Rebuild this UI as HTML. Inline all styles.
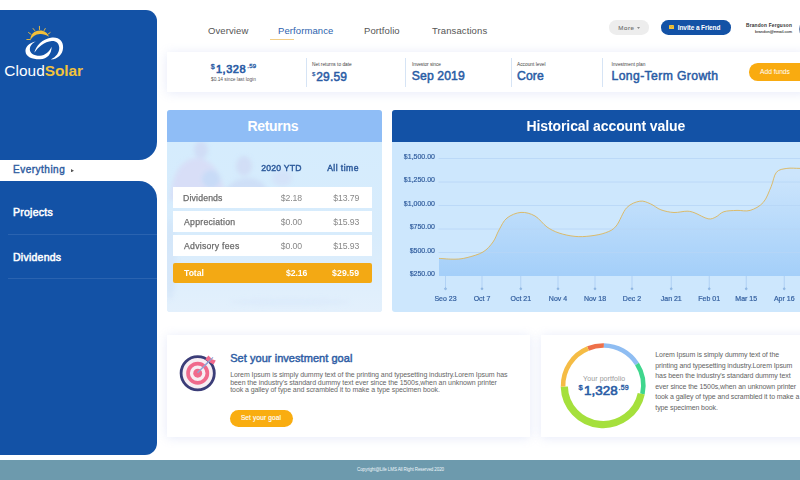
<!DOCTYPE html>
<html><head><meta charset="utf-8">
<style>
*{margin:0;padding:0;box-sizing:border-box}
html,body{width:800px;height:480px;overflow:hidden;background:#fff;font-family:"Liberation Sans",sans-serif}
.a{position:absolute}
.sb{background:#1352a6}
#sbtop{left:0;top:10px;width:157px;height:150px;border-radius:0 11px 18px 0}
#sbbot{left:0;top:181px;width:157px;height:274px;border-radius:0 18px 12px 0}
#footer{left:0;top:460px;width:800px;height:20px;background:#6d9aad;color:#eef6fa;font-size:4.5px;letter-spacing:-0.1px;text-align:center;line-height:20px;text-indent:1px}
.nav{top:26.2px;font-size:9.5px;line-height:1;color:#555;white-space:nowrap;letter-spacing:0.1px}
.card{background:#fff;box-shadow:0 1px 10px rgba(130,150,225,.2)}
.lbl{font-size:4.8px;line-height:1;color:#444;white-space:nowrap}
.big{font-size:13px;font-weight:bold;color:#2a5ca5;white-space:nowrap}
.div{width:1px;background:#d6e4f5}
.bv{line-height:1;color:#2a5ca5;white-space:nowrap;-webkit-text-stroke:0.5px #2a5ca5}

.th{font-size:8.6px;line-height:1;color:#2e5b9c;white-space:nowrap;-webkit-text-stroke:0.45px #2e5b9c}
.row{left:6.1px;width:199px;background:#fff;font-size:8.7px;line-height:1;color:#6b6b6b;white-space:nowrap}
.row span{position:absolute;top:6.3px}
.row .l{left:10px;-webkit-text-stroke:0.25px #6b6b6b}
.row .v1{right:70.1px;color:#888;letter-spacing:-0.1px}
.row .v2{right:12.9px;color:#888;letter-spacing:-0.1px}
.tot{background:#f3a914;color:#fff;font-weight:bold;border-radius:2px}
.tot span,.tot .v1,.tot .v2{color:#fff}
.tot .l{-webkit-text-stroke:0}
.body7{font-size:7px;color:#666;line-height:8px}
</style></head><body>

<!-- Sidebar -->
<div id="sbtop" class="a sb"></div>
<div id="sbbot" class="a sb"></div>
<div class="a" style="left:13px;top:164.8px;font-size:10px;line-height:1;color:#2f5c9f;letter-spacing:0.5px;-webkit-text-stroke:0.4px #2f5c9f;white-space:nowrap">Everything</div>
<svg class="a" style="left:70.6px;top:168.8px" width="3" height="3.4" viewBox="0 0 3 3.4"><path d="M0,0 L3,1.7 L0,3.4 Z" fill="#555"/></svg>
<div class="a" style="left:13px;top:206.8px;font-size:10.5px;line-height:1;color:#fff;letter-spacing:0.25px;-webkit-text-stroke:0.5px #fff;white-space:nowrap">Projects</div>
<div class="a" style="left:8px;top:234px;width:149px;height:1px;background:#2a63b0"></div>
<div class="a" style="left:13px;top:251.6px;font-size:10.5px;line-height:1;color:#fff;letter-spacing:0.25px;-webkit-text-stroke:0.5px #fff;white-space:nowrap">Dividends</div>
<div class="a" style="left:8px;top:277.5px;width:149px;height:1px;background:#2a63b0"></div>

<!-- Logo -->
<svg class="a" style="left:20px;top:22px" width="50" height="40" viewBox="0 0 600 480">
  <path fill="#f2bf3a" d="M125,225 C118,150 172,103 240,103 C292,103 332,132 348,178 C310,152 278,142 240,144 C185,147 142,178 125,225 Z"/>
  <g stroke="#f2bf3a" stroke-width="11" stroke-linecap="round">
    <line x1="103" y1="127" x2="133" y2="148"/>
    <line x1="157" y1="78" x2="177" y2="103"/>
    <line x1="233" y1="52" x2="234" y2="90"/>
    <line x1="303" y1="78" x2="290" y2="102"/>
    <line x1="362" y1="127" x2="336" y2="146"/>
    <line x1="82" y1="210" x2="120" y2="210"/>
  </g>
  <g fill="#fff">
    <path d="M192,234 C110,248 60,300 66,355 C72,422 150,450 240,448 C330,445 378,385 380,298 C352,360 302,403 240,404 C165,405 116,372 118,326 C120,282 150,250 192,234 Z"/>
    <path d="M172,370 C190,290 268,198 385,186 C472,178 522,236 517,308 C512,390 455,442 370,450 C436,418 471,368 471,310 C471,255 432,224 382,227 C292,233 218,298 172,370 Z"/>
  </g>
</svg>

<div class="a" style="left:4.3px;top:63px;font-size:15.4px;line-height:1;color:#fff;white-space:nowrap;letter-spacing:0.05px">Cloud<b style="color:#f1c23c;letter-spacing:-0.05px">Solar</b></div>

<!-- Nav -->
<div class="a nav" style="left:208px">Overview</div>
<div class="a nav" style="left:278px;color:#2d62ad">Performance</div>
<div class="a" style="left:270px;top:38.5px;width:24px;height:0.9px;background:#f2cd84"></div>
<div class="a nav" style="left:364px">Portfolio</div>
<div class="a nav" style="left:432px">Transactions</div>

<div class="a" style="left:609px;top:20.2px;width:40.2px;height:14.6px;border-radius:7.3px;background:#ededed"></div>
<div class="a" style="left:618.3px;top:24.75px;font-size:6.2px;line-height:1;color:#6f6f6f;letter-spacing:0.5px;white-space:nowrap;-webkit-text-stroke:0.1px #6f6f6f">More</div>
<svg class="a" style="left:636.5px;top:26.5px" width="3" height="2" viewBox="0 0 3 2"><path d="M0,0 L3,0 L1.5,2 Z" fill="#888"/></svg>
<div class="a" style="left:660.7px;top:20.2px;width:70.3px;height:14.6px;border-radius:7.3px;background:#1352a6"></div>
<div class="a" style="left:668.9px;top:25px;width:5.5px;height:4.1px;background:#f2c33c;border-radius:0.5px"></div>
<svg class="a" style="left:668.9px;top:25px" width="5.5" height="4.1" viewBox="0 0 5.5 4.1"><path d="M0.2,0.3 L2.75,2.2 L5.3,0.3" fill="none" stroke="#c9981e" stroke-width="0.5"/></svg>
<div class="a" style="left:677.8px;top:24.5px;font-size:6.5px;line-height:1;font-weight:bold;color:#fff;letter-spacing:-0.1px;white-space:nowrap">Invite a Friend</div>
<div class="a" style="left:746px;top:23.7px;font-size:4.8px;line-height:1;font-weight:bold;color:#333;letter-spacing:0.2px;white-space:nowrap">Brandon Ferguson</div>
<div class="a" style="left:755px;top:29.6px;font-size:4px;line-height:1;color:#444;white-space:nowrap;-webkit-text-stroke:0.1px #444">brandon@email.com</div>
<div class="a" style="left:798.5px;top:19px;width:20px;height:20px;border-radius:50%;background:radial-gradient(circle at 30% 45%,#8aa3c8,#3a5585 70%)"></div>

<!-- Stats card -->
<div class="a card" style="left:167px;top:52px;width:640px;height:40px"></div>
<div class="a bv" style="left:210.8px;top:62.6px;font-size:7.2px;-webkit-text-stroke:0.3px #2a5ca5">$</div>
<div class="a bv" style="left:216px;top:63.7px;font-size:11px;letter-spacing:0.5px;-webkit-text-stroke:0.65px #2a5ca5">1,328</div>
<div class="a bv" style="left:247.3px;top:63px;font-size:6px;letter-spacing:0.2px;-webkit-text-stroke:0.35px #2a5ca5">.59</div>
<div class="a lbl" style="left:211px;top:78.4px;color:#555">$0.14 since last login</div>
<div class="a div" style="left:305.5px;top:58px;height:28.5px"></div>
<div class="a lbl" style="left:312px;top:62.9px">Net returns to date</div>
<div class="a bv" style="left:312px;top:71.2px;font-size:6px;-webkit-text-stroke:0.2px #2a5ca5">$</div>
<div class="a bv" style="left:316.3px;top:70.9px;font-size:12px;letter-spacing:0.15px">29.59</div>
<div class="a div" style="left:405px;top:58px;height:28.5px"></div>
<div class="a lbl" style="left:412px;top:62.9px;letter-spacing:-0.05px">Investor since</div>
<div class="a bv" style="left:411.8px;top:70px;font-size:12.2px;letter-spacing:0.1px">Sep 2019</div>
<div class="a div" style="left:511px;top:58px;height:28.5px"></div>
<div class="a lbl" style="left:517px;top:62.9px">Account level</div>
<div class="a bv" style="left:517px;top:70.3px;font-size:12.2px;letter-spacing:0.1px">Core</div>
<div class="a div" style="left:601.5px;top:58px;height:28.5px"></div>
<div class="a lbl" style="left:611.5px;top:62.9px">Investment plan</div>
<div class="a bv" style="left:611.5px;top:70px;font-size:12.2px;letter-spacing:0.38px">Long-Term Growth</div>
<div class="a" style="left:748.8px;top:63.15px;width:60px;height:17.5px;border-radius:8.75px;background:#f9ab10"></div><div class="a" style="left:760.1px;top:68.8px;font-size:6.7px;line-height:1;color:#fff;letter-spacing:-0.05px;white-space:nowrap">Add funds</div>

<!-- Returns panel -->
<div class="a" style="left:167px;top:110px;width:215px;height:202px;background:#dcecfb;border-radius:3px;overflow:hidden">
  <div class="a" style="left:0;top:0;width:215px;height:32px;background:#8fbdf6"></div><div class="a" style="left:80.4px;top:9.1px;color:#fff;font-size:14px;font-weight:bold;line-height:1;letter-spacing:-0.3px;white-space:nowrap">Returns</div>

  <div class="a" style="left:0;top:32px;width:215px;height:170px;background:linear-gradient(180deg,#d5ecfd 0%,#d8ecfc 55%,#e3f0fc 100%)"></div>
  <svg class="a" style="left:0;top:32px" width="215" height="170" viewBox="167 142 215 170">
    <defs><filter id="bl" x="-50%" y="-50%" width="200%" height="200%"><feGaussianBlur stdDeviation="2.2"/></filter></defs>
    <g filter="url(#bl)">
      <path d="M170,200 C172,175 180,160 195,158 C210,158 222,170 226,200 Z" fill="#d8d6f4" opacity="0.6"/>
      <ellipse cx="201" cy="150" rx="7" ry="9" fill="#cdd3f2" opacity="0.6"/>
      <ellipse cx="211" cy="179" rx="9" ry="9" fill="#bcd8f7" opacity="0.6"/>
      <ellipse cx="244" cy="166" rx="8" ry="10" fill="#cfd5f2" opacity="0.6"/>
      <path d="M222,200 C224,186 235,178 248,178 C262,178 268,188 270,200 Z" fill="#c9d6f3" opacity="0.55"/>
      <ellipse cx="282" cy="178" rx="10" ry="8" fill="#d4def6" opacity="0.6"/>
      <ellipse cx="170" cy="260" rx="6" ry="40" fill="#cfe2f8" opacity="0.5"/>
      <ellipse cx="290" cy="302" rx="60" ry="4" fill="#d3e6f9" opacity="0.35"/>
    </g>
  </svg>
  <div class="a" style="left:0;top:32px;width:215px;height:170px">
    <div class="a th" style="right:80.3px;top:22.3px;letter-spacing:0.25px">2020 YTD</div>
    <div class="a th" style="right:23.1px;top:22.3px;letter-spacing:0.45px">All time</div>
    <div class="a row" style="top:45.3px;height:20.8px"><span class="l" style="letter-spacing:0.15px">Dividends</span><span class="v1">$2.18</span><span class="v2">$13.79</span></div>
    <div class="a row" style="top:69.3px;height:20.7px"><span class="l" style="left:10.9px;letter-spacing:0.26px">Appreciation</span><span class="v1">$0.00</span><span class="v2">$15.93</span></div>
    <div class="a row" style="top:93.3px;height:20.7px"><span class="l" style="left:10.9px;letter-spacing:0.26px">Advisory fees</span><span class="v1">$0.00</span><span class="v2">$15.93</span></div>
    <div class="a row tot" style="top:120.6px;height:20.2px"><span class="l" style="left:11px;top:6.6px;letter-spacing:-0.1px">Total</span><span class="v1" style="right:64.9px;top:6.3px">$2.16</span><span class="v2" style="top:6.3px;letter-spacing:0.1px">$29.59</span></div>
  </div>
</div>

<!-- Historical panel -->
<div class="a" style="left:392px;top:110px;width:420px;height:202px;background:#cde7fd;border-radius:3px;overflow:hidden">
  <div class="a" style="left:0;top:0;width:420px;height:32px;background:#1352a6"></div><div class="a" style="left:134.5px;top:9.2px;color:#fff;font-size:14px;font-weight:bold;line-height:1;letter-spacing:-0.1px;white-space:nowrap">Historical account value</div>
</div>

<svg class="a" style="left:392px;top:142px" width="420" height="170" viewBox="392 142 420 170">
<defs><linearGradient id="fg" gradientUnits="userSpaceOnUse" x1="0" y1="175" x2="0" y2="276"><stop offset="0" stop-color="#cce5fc"/><stop offset="1" stop-color="#a4cff9"/></linearGradient></defs>
<path d="M439.0,258.4 C441.7,258.5 450.3,259.3 455.0,259.2 C459.7,259.1 462.3,258.8 467.0,257.6 C471.7,256.4 478.7,254.6 483.0,252.0 C487.3,249.4 490.3,245.7 493.0,242.0 C495.7,238.3 496.7,234.0 499.0,230.0 C501.3,226.0 503.3,220.9 507.0,218.0 C510.7,215.1 516.3,212.7 521.0,212.4 C525.7,212.1 530.7,213.6 535.0,216.0 C539.3,218.4 543.0,224.2 547.0,227.0 C551.0,229.8 554.3,231.4 559.0,233.0 C563.7,234.6 569.8,235.9 575.0,236.4 C580.2,236.9 584.9,236.6 590.0,236.0 C595.1,235.4 601.3,234.4 605.7,232.7 C610.1,231.0 612.7,230.2 616.2,226.0 C619.7,221.8 622.8,211.8 626.7,207.7 C630.7,203.6 636.0,201.8 639.9,201.2 C643.8,200.5 646.9,202.4 650.4,203.8 C653.9,205.2 657.0,208.4 660.9,209.8 C664.8,211.2 669.6,212.3 674.0,212.5 C678.4,212.7 683.6,211.1 687.1,211.2 C690.6,211.3 691.5,211.7 695.0,213.0 C698.5,214.3 704.6,218.2 708.1,218.8 C711.6,219.5 713.4,218.1 716.0,216.9 C718.6,215.7 720.4,212.8 723.9,211.7 C727.4,210.6 732.6,210.6 737.0,210.4 C741.4,210.2 745.7,211.7 750.1,210.4 C754.5,209.1 759.7,206.4 763.2,202.5 C766.7,198.6 768.9,191.7 771.1,186.7 C773.3,181.7 773.8,175.4 776.4,172.3 C779.0,169.2 783.0,169.1 786.9,168.4 C790.8,167.8 795.8,168.4 800.0,168.4 C804.2,168.4 810.0,168.4 812.0,168.4 L812,276 L439,276 Z" fill="url(#fg)"/>
<g><line x1="438.5" y1="158.5" x2="812" y2="158.5" stroke="#b6d6f6" stroke-width="0.8"/><line x1="438.5" y1="182.0" x2="812" y2="182.0" stroke="#b6d6f6" stroke-width="0.8"/><line x1="438.5" y1="205.5" x2="812" y2="205.5" stroke="#b6d6f6" stroke-width="0.8"/><line x1="438.5" y1="229.0" x2="812" y2="229.0" stroke="#b6d6f6" stroke-width="0.8"/><line x1="438.5" y1="252.5" x2="812" y2="252.5" stroke="#b6d6f6" stroke-width="0.8"/></g>
<g font-family="Liberation Sans" font-size="7" fill="#335f9f" stroke="#335f9f" stroke-width="0.2"><text x="435" y="158.5" text-anchor="end">$1,500.00</text><text x="435" y="182.0" text-anchor="end">$1,250.00</text><text x="435" y="205.5" text-anchor="end">$1,000.00</text><text x="435" y="229.0" text-anchor="end">$750.00</text><text x="435" y="252.5" text-anchor="end">$500.00</text><text x="435" y="276.0" text-anchor="end">$250.00</text><line x1="445.50" y1="276" x2="445.50" y2="288.8" stroke="#a9cdf3" stroke-width="0.8"/><circle cx="445.50" cy="288.8" r="1" fill="#9cc5f0"/><text x="445.50" y="301" text-anchor="middle">Seo 23</text><line x1="482.00" y1="276" x2="482.00" y2="288.8" stroke="#a9cdf3" stroke-width="0.8"/><circle cx="482.00" cy="288.8" r="1" fill="#9cc5f0"/><text x="482.00" y="301" text-anchor="middle">Oct 7</text><line x1="520.75" y1="276" x2="520.75" y2="288.8" stroke="#a9cdf3" stroke-width="0.8"/><circle cx="520.75" cy="288.8" r="1" fill="#9cc5f0"/><text x="520.75" y="301" text-anchor="middle">Oct 21</text><line x1="558.00" y1="276" x2="558.00" y2="288.8" stroke="#a9cdf3" stroke-width="0.8"/><circle cx="558.00" cy="288.8" r="1" fill="#9cc5f0"/><text x="558.00" y="301" text-anchor="middle">Nov 4</text><line x1="595.00" y1="276" x2="595.00" y2="288.8" stroke="#a9cdf3" stroke-width="0.8"/><circle cx="595.00" cy="288.8" r="1" fill="#9cc5f0"/><text x="595.00" y="301" text-anchor="middle">Nov 18</text><line x1="632.00" y1="276" x2="632.00" y2="288.8" stroke="#a9cdf3" stroke-width="0.8"/><circle cx="632.00" cy="288.8" r="1" fill="#9cc5f0"/><text x="632.00" y="301" text-anchor="middle">Dec 2</text><line x1="671.25" y1="276" x2="671.25" y2="288.8" stroke="#a9cdf3" stroke-width="0.8"/><circle cx="671.25" cy="288.8" r="1" fill="#9cc5f0"/><text x="671.25" y="301" text-anchor="middle">Jan 21</text><line x1="709.25" y1="276" x2="709.25" y2="288.8" stroke="#a9cdf3" stroke-width="0.8"/><circle cx="709.25" cy="288.8" r="1" fill="#9cc5f0"/><text x="709.25" y="301" text-anchor="middle">Feb 01</text><line x1="746.25" y1="276" x2="746.25" y2="288.8" stroke="#a9cdf3" stroke-width="0.8"/><circle cx="746.25" cy="288.8" r="1" fill="#9cc5f0"/><text x="746.25" y="301" text-anchor="middle">Mar 15</text><line x1="784.25" y1="276" x2="784.25" y2="288.8" stroke="#a9cdf3" stroke-width="0.8"/><circle cx="784.25" cy="288.8" r="1" fill="#9cc5f0"/><text x="784.25" y="301" text-anchor="middle">Apr 16</text></g>
<path d="M439.0,258.4 C441.7,258.5 450.3,259.3 455.0,259.2 C459.7,259.1 462.3,258.8 467.0,257.6 C471.7,256.4 478.7,254.6 483.0,252.0 C487.3,249.4 490.3,245.7 493.0,242.0 C495.7,238.3 496.7,234.0 499.0,230.0 C501.3,226.0 503.3,220.9 507.0,218.0 C510.7,215.1 516.3,212.7 521.0,212.4 C525.7,212.1 530.7,213.6 535.0,216.0 C539.3,218.4 543.0,224.2 547.0,227.0 C551.0,229.8 554.3,231.4 559.0,233.0 C563.7,234.6 569.8,235.9 575.0,236.4 C580.2,236.9 584.9,236.6 590.0,236.0 C595.1,235.4 601.3,234.4 605.7,232.7 C610.1,231.0 612.7,230.2 616.2,226.0 C619.7,221.8 622.8,211.8 626.7,207.7 C630.7,203.6 636.0,201.8 639.9,201.2 C643.8,200.5 646.9,202.4 650.4,203.8 C653.9,205.2 657.0,208.4 660.9,209.8 C664.8,211.2 669.6,212.3 674.0,212.5 C678.4,212.7 683.6,211.1 687.1,211.2 C690.6,211.3 691.5,211.7 695.0,213.0 C698.5,214.3 704.6,218.2 708.1,218.8 C711.6,219.5 713.4,218.1 716.0,216.9 C718.6,215.7 720.4,212.8 723.9,211.7 C727.4,210.6 732.6,210.6 737.0,210.4 C741.4,210.2 745.7,211.7 750.1,210.4 C754.5,209.1 759.7,206.4 763.2,202.5 C766.7,198.6 768.9,191.7 771.1,186.7 C773.3,181.7 773.8,175.4 776.4,172.3 C779.0,169.2 783.0,169.1 786.9,168.4 C790.8,167.8 795.8,168.4 800.0,168.4 C804.2,168.4 810.0,168.4 812.0,168.4" fill="none" stroke="#ddb65a" stroke-width="0.9"/>
</svg>
<!-- Goal card -->
<div class="a card" style="left:167px;top:334.7px;width:363.2px;height:102px"></div>

<svg class="a" style="left:178px;top:353px" width="40" height="40" viewBox="178 353 40 40">
  <circle cx="197.7" cy="373.2" r="16.6" fill="#f7eef3" stroke="#3b3d78" stroke-width="2.8"/>
  <circle cx="197.7" cy="373.2" r="9.65" fill="none" stroke="#f06a8c" stroke-width="3.7"/>
  <circle cx="197.7" cy="373.2" r="4.45" fill="#f06a8c"/>
  <line x1="197.5" y1="372.8" x2="211" y2="359.3" stroke="#8ea6d6" stroke-width="1.4"/>
  <path d="M205.2,359.6 L208.4,355.4 L211.2,358.2 L212.6,359.6 L215.8,360.6 L213.6,364.6 L209.8,362.4 Z" fill="#f06a8c"/>
  <line x1="206" y1="364.3" x2="213" y2="357.3" stroke="#8ea6d6" stroke-width="1.2"/>
</svg>
<div class="a" style="left:230.2px;top:353.1px;font-size:11px;line-height:1;color:#2e5da4;letter-spacing:0.05px;-webkit-text-stroke:0.45px #2e5da4;white-space:nowrap">Set your investment goal</div>
<div class="a" style="left:230.2px;top:370.9px;font-size:7px;line-height:7.75px;color:#666;letter-spacing:-0.07px;white-space:nowrap">Lorem Ipsum is simply dummy text of the printing and typesetting industry.Lorem Ipsum has<br>been the industry's standard dummy text ever since the 1500s,when an unknown printer<br>took a galley of type and scrambled it to make a type specimen book.</div>
<div class="a" style="left:229.7px;top:410.2px;width:63.3px;height:17.3px;border-radius:8.65px;background:#f9ad10"></div>
<div class="a" style="left:240.9px;top:415px;font-size:6.5px;line-height:1;color:#fff;letter-spacing:0.14px;-webkit-text-stroke:0.15px #fff;white-space:nowrap">Set your goal</div>
<!-- Portfolio card -->
<div class="a card" style="left:540.5px;top:334.7px;width:270px;height:102px"></div>


<svg class="a" style="left:553px;top:336px" width="100" height="100" viewBox="553 336 100 100">
  <g fill="none">
  <path d="M587.98,348.50 A40.10,40.10 0 0 1 603.90,345.51" stroke="#ee7049" stroke-width="4.6"/>
<path d="M603.90,345.51 A40.10,40.10 0 0 1 637.02,364.05" stroke="#8fbdf2" stroke-width="4.6"/>
<path d="M637.02,364.05 A40.10,40.10 0 0 1 642.42,393.94" stroke="#3fd68d" stroke-width="4.6"/>
<path d="M641.25,393.69 A38.90,38.90 0 0 1 564.31,386.62" stroke="#a5e03c" stroke-width="7.2"/>
<path d="M563.11,386.65 A40.10,40.10 0 0 1 587.98,348.50" stroke="#f5bc45" stroke-width="4.6"/>
</g>
</svg>
<div class="a" style="left:583.1px;top:375px;font-size:7px;line-height:1;color:#999;letter-spacing:0.09px;white-space:nowrap">Your portfolio</div>
<div class="a bv" style="left:578.5px;top:384px;font-size:7.6px;-webkit-text-stroke:0.35px #2a5ca5">$</div>
<div class="a bv" style="left:584px;top:383.9px;font-size:13.4px;letter-spacing:0.05px;-webkit-text-stroke:0.65px #2a5ca5">1,328</div>
<div class="a bv" style="left:618.6px;top:384.2px;font-size:7px;letter-spacing:0.1px;-webkit-text-stroke:0.35px #2a5ca5">.59</div>
<div class="a" style="left:655.3px;top:350px;font-size:7px;line-height:10.6px;color:#636363;letter-spacing:-0.09px;white-space:nowrap">Lorem Ipsum is simply dummy text of the<br>printing and typesetting industry.Lorem Ipsum<br>has been the industry's standard dummy text<br>ever since the 1500s,when an unknown printer<br>took a galley of type and scrambled it to make a<br>type specimen book.</div>
<div id="footer" class="a">Copyright@Life LMS All Right Reserved 2020</div>
</body></html>
